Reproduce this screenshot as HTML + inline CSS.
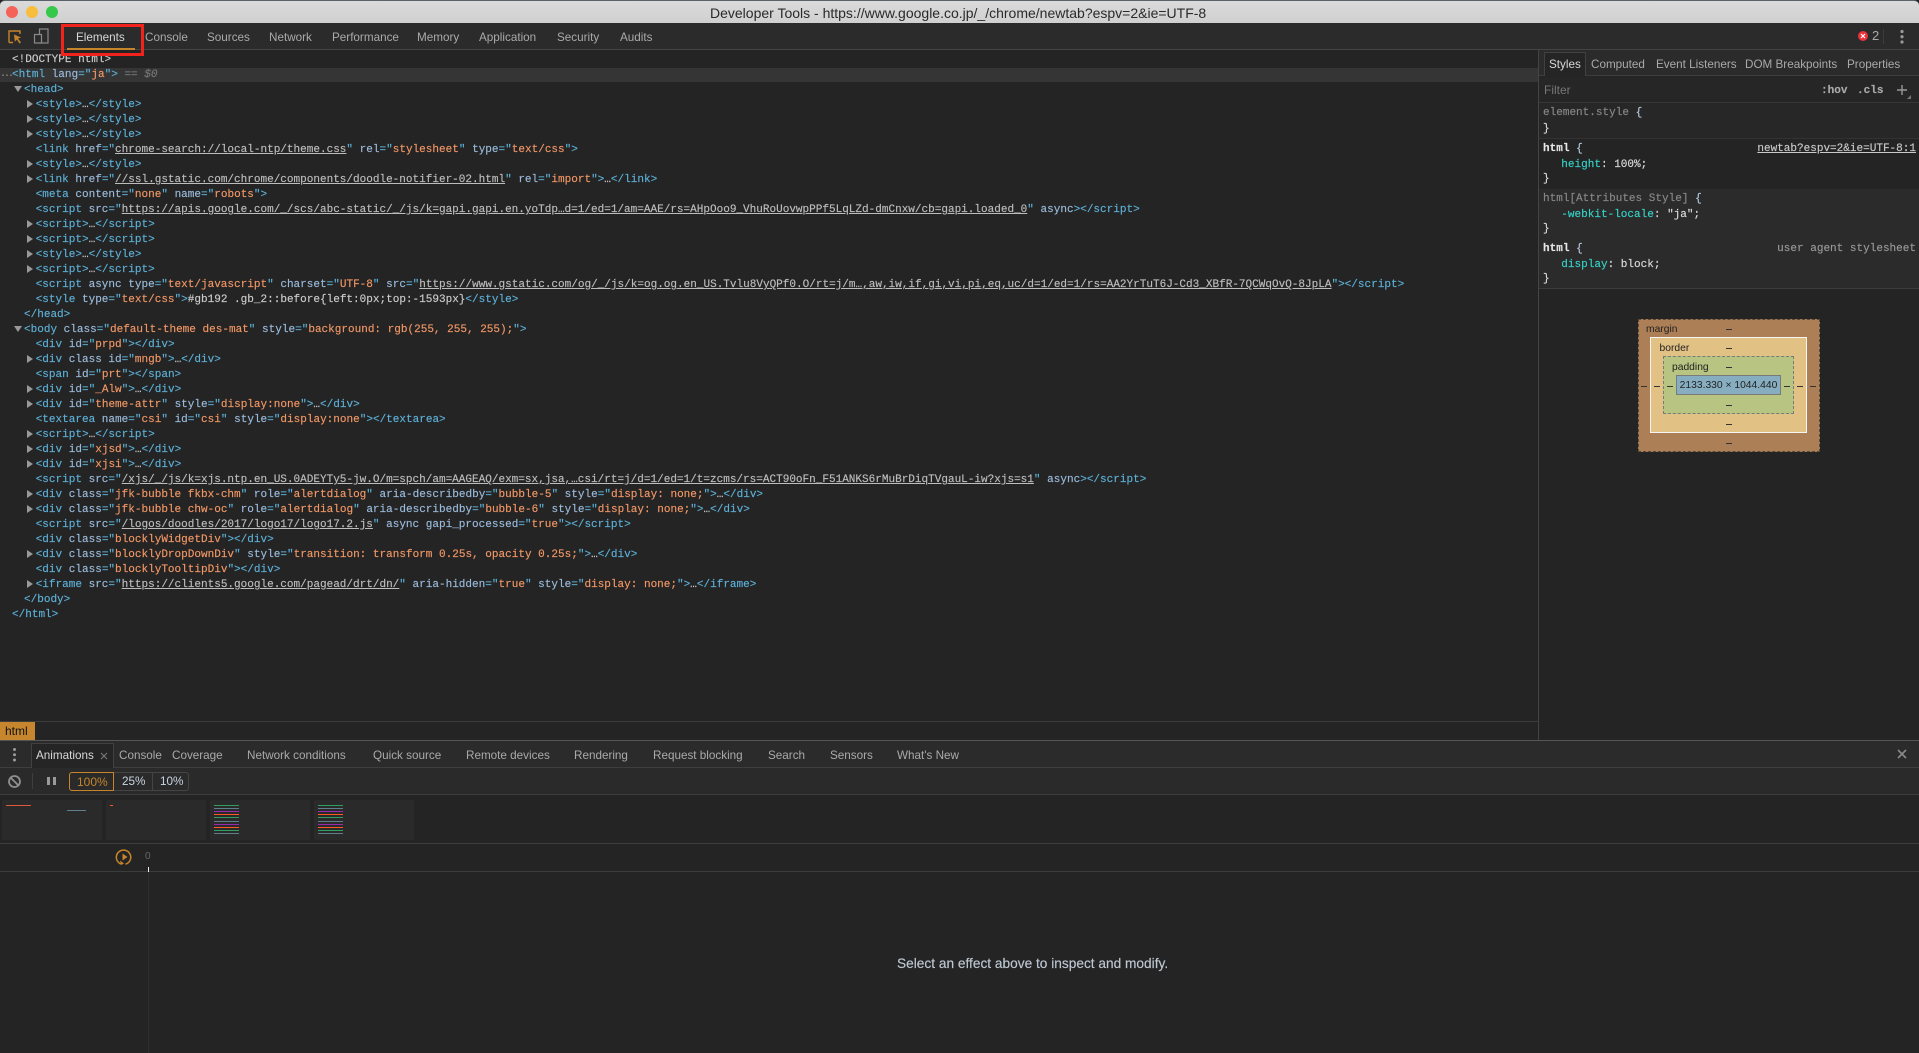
<!DOCTYPE html>
<html><head><meta charset="utf-8"><title>Developer Tools</title>
<style>
*{box-sizing:border-box}
html,body{margin:0;padding:0;width:1919px;height:1053px;overflow:hidden;background:#242424}
body{position:relative;font-family:"Liberation Sans",sans-serif;font-size:11.7px;color:#aaa;filter:blur(.3px)}
.r{position:absolute}
.tx{position:absolute;white-space:pre;line-height:16px}
#code{position:absolute;left:0;top:53px;width:1538px;font:11.03px/15px "Liberation Mono",monospace;color:#5db0d7;-webkit-text-stroke:.15px}
#code div{height:15px;white-space:pre;position:relative}
.i0{padding-left:12px}.i1{padding-left:24px}.i2{padding-left:35.7px}
.a{color:#9bbbdc}.v{color:#f29766}.u{color:#bdbdbd;text-decoration:underline}.w{color:#ccc}.g{color:#777}
.ar:before{content:"";position:absolute;left:27px;top:2px;border-left:6px solid #999;border-top:4px solid transparent;border-bottom:4px solid transparent}
.ad:before{content:"";position:absolute;left:13.5px;top:3px;border-top:6px solid #999;border-left:4px solid transparent;border-right:4px solid transparent}
.m{position:absolute;margin-top:1px;font:11.03px/16px "Liberation Mono",monospace;white-space:pre;color:#ddd;-webkit-text-stroke:.15px}
.p{color:#35d4c7}.n{color:#888}
.bx{position:absolute;margin-top:1px;font-size:10.3px;line-height:12px;color:#222;white-space:pre}
.d{position:absolute;width:6px;height:1px;background:#333}
.ln{position:absolute;width:25px;height:1px}
.th{position:absolute;top:800px;width:100px;height:40px;background:#2a2a2a;border-radius:2px}
</style></head><body>

<!-- title bar -->
<div class="r" style="left:0;top:0;width:1919px;height:23px;background:linear-gradient(#dadada,#d0d0d0);border-top:1px solid #5a626c;border-radius:5px 5px 0 0"></div>
<div class="r" style="left:6px;top:6px;width:12px;height:12px;border-radius:50%;background:#f5625a"></div>
<div class="r" style="left:26px;top:6px;width:12px;height:12px;border-radius:50%;background:#f8bd3c"></div>
<div class="r" style="left:46px;top:6px;width:12px;height:12px;border-radius:50%;background:#36c84b"></div>
<div class="tx" style="left:710px;top:5px;font-size:14px;color:#2a2a2a">Developer Tools - https://www.google.co.jp/_/chrome/newtab?espv=2&amp;ie=UTF-8</div>

<!-- main toolbar -->
<div class="r" style="left:0;top:23px;width:1919px;height:27px;background:#2b2b2b;border-bottom:1px solid #444"></div>
<svg class="r" style="left:7px;top:28px" width="44" height="18" viewBox="0 0 44 18">
<path d="M2 14.5V3h11v3M2 14.5h4" fill="none" stroke="#c6842b" stroke-width="1.4"/>
<path d="M7 6.5l7 3-3 1 3 4-1.5 1-2.7-4-2 2.2z" fill="#c6842b"/>
<rect x="32.5" y="1" width="8.5" height="14" fill="none" stroke="#8a8a8a" stroke-width="1.2"/>
<rect x="27.5" y="6.5" width="7" height="8.5" fill="#2b2b2b" stroke="#8a8a8a" stroke-width="1.2"/>
</svg>
<div class="tx" style="left:76px;top:30px;color:#d8d8d8">Elements</div>
<div class="tx" style="left:145px;top:30px">Console</div>
<div class="tx" style="left:207px;top:30px">Sources</div>
<div class="tx" style="left:269px;top:30px">Network</div>
<div class="tx" style="left:332px;top:30px">Performance</div>
<div class="tx" style="left:417px;top:30px">Memory</div>
<div class="tx" style="left:479px;top:30px">Application</div>
<div class="tx" style="left:557px;top:30px">Security</div>
<div class="tx" style="left:620px;top:30px">Audits</div>
<div class="r" style="left:67px;top:48px;width:68px;height:2px;background:#c6842b"></div>
<div class="r" style="left:61px;top:24px;width:83px;height:32px;border:3px solid #f1231c;z-index:5"></div>
<svg class="r" style="left:1857px;top:30px" width="12" height="12" viewBox="0 0 12 12"><circle cx="6" cy="6" r="5" fill="#e8333a"/><path d="M4 4l4 4M8 4l-4 4" stroke="#fff" stroke-width="1.2"/></svg>
<div class="tx" style="left:1872px;top:28px;font-size:13px">2</div>
<div class="r" style="left:1883px;top:29px;width:1px;height:15px;background:#3c3c3c"></div>
<svg class="r" style="left:1899px;top:29px" width="6" height="16"><circle cx="3" cy="2.5" r="1.6" fill="#999"/><circle cx="3" cy="7.7" r="1.6" fill="#999"/><circle cx="3" cy="13" r="1.6" fill="#999"/></svg>

<!-- selected line -->
<div class="r" style="left:0;top:68px;width:1538px;height:14px;background:#353535"></div>
<div class="tx" style="left:0;top:67px;font:10px/16px 'Liberation Mono',monospace;color:#999;letter-spacing:-2px">...</div>

<!-- code -->
<div id="code">
<div class="i0 w">&lt;!DOCTYPE html&gt;</div>
<div class="i0">&lt;html <span class="a">lang</span>="<span class="v">ja</span>"&gt; <span class="g">== <i>$0</i></span></div>
<div class="i1 ad">&lt;head&gt;</div>
<div class="i2 ar">&lt;style&gt;<span class="w">…</span>&lt;/style&gt;</div>
<div class="i2 ar">&lt;style&gt;<span class="w">…</span>&lt;/style&gt;</div>
<div class="i2 ar">&lt;style&gt;<span class="w">…</span>&lt;/style&gt;</div>
<div class="i2">&lt;link <span class="a">href</span>="<span class="u">chrome-search://local-ntp/theme.css</span>" <span class="a">rel</span>="<span class="v">stylesheet</span>" <span class="a">type</span>="<span class="v">text/css</span>"&gt;</div>
<div class="i2 ar">&lt;style&gt;<span class="w">…</span>&lt;/style&gt;</div>
<div class="i2 ar">&lt;link <span class="a">href</span>="<span class="u">//ssl.gstatic.com/chrome/components/doodle-notifier-02.html</span>" <span class="a">rel</span>="<span class="v">import</span>"&gt;<span class="w">…</span>&lt;/link&gt;</div>
<div class="i2">&lt;meta <span class="a">content</span>="<span class="v">none</span>" <span class="a">name</span>="<span class="v">robots</span>"&gt;</div>
<div class="i2">&lt;script <span class="a">src</span>="<span class="u">https://apis.google.com/_/scs/abc-static/_/js/k=gapi.gapi.en.yoTdp…d=1/ed=1/am=AAE/rs=AHpOoo9_VhuRoUovwpPPf5LqLZd-dmCnxw/cb=gapi.loaded_0</span>" <span class="a">async</span>&gt;&lt;/script&gt;</div>
<div class="i2 ar">&lt;script&gt;<span class="w">…</span>&lt;/script&gt;</div>
<div class="i2 ar">&lt;script&gt;<span class="w">…</span>&lt;/script&gt;</div>
<div class="i2 ar">&lt;style&gt;<span class="w">…</span>&lt;/style&gt;</div>
<div class="i2 ar">&lt;script&gt;<span class="w">…</span>&lt;/script&gt;</div>
<div class="i2">&lt;script <span class="a">async type</span>="<span class="v">text/javascript</span>" <span class="a">charset</span>="<span class="v">UTF-8</span>" <span class="a">src</span>="<span class="u">https://www.gstatic.com/og/_/js/k=og.og.en_US.Tvlu8VyQPf0.O/rt=j/m…,aw,iw,if,gi,vi,pi,eq,uc/d=1/ed=1/rs=AA2YrTuT6J-Cd3_XBfR-7QCWqOvQ-8JpLA</span>"&gt;&lt;/script&gt;</div>
<div class="i2">&lt;style <span class="a">type</span>="<span class="v">text/css</span>"&gt;<span class="w">#gb192 .gb_2::before{left:0px;top:-1593px}</span>&lt;/style&gt;</div>
<div class="i1">&lt;/head&gt;</div>
<div class="i1 ad">&lt;body <span class="a">class</span>="<span class="v">default-theme des-mat</span>" <span class="a">style</span>="<span class="v">background: rgb(255, 255, 255);</span>"&gt;</div>
<div class="i2">&lt;div <span class="a">id</span>="<span class="v">prpd</span>"&gt;&lt;/div&gt;</div>
<div class="i2 ar">&lt;div <span class="a">class id</span>="<span class="v">mngb</span>"&gt;<span class="w">…</span>&lt;/div&gt;</div>
<div class="i2">&lt;span <span class="a">id</span>="<span class="v">prt</span>"&gt;&lt;/span&gt;</div>
<div class="i2 ar">&lt;div <span class="a">id</span>="<span class="v">_Alw</span>"&gt;<span class="w">…</span>&lt;/div&gt;</div>
<div class="i2 ar">&lt;div <span class="a">id</span>="<span class="v">theme-attr</span>" <span class="a">style</span>="<span class="v">display:none</span>"&gt;<span class="w">…</span>&lt;/div&gt;</div>
<div class="i2">&lt;textarea <span class="a">name</span>="<span class="v">csi</span>" <span class="a">id</span>="<span class="v">csi</span>" <span class="a">style</span>="<span class="v">display:none</span>"&gt;&lt;/textarea&gt;</div>
<div class="i2 ar">&lt;script&gt;<span class="w">…</span>&lt;/script&gt;</div>
<div class="i2 ar">&lt;div <span class="a">id</span>="<span class="v">xjsd</span>"&gt;<span class="w">…</span>&lt;/div&gt;</div>
<div class="i2 ar">&lt;div <span class="a">id</span>="<span class="v">xjsi</span>"&gt;<span class="w">…</span>&lt;/div&gt;</div>
<div class="i2">&lt;script <span class="a">src</span>="<span class="u">/xjs/_/js/k=xjs.ntp.en_US.0ADEYTy5-jw.O/m=spch/am=AAGEAQ/exm=sx,jsa,…csi/rt=j/d=1/ed=1/t=zcms/rs=ACT90oFn_F51ANKS6rMuBrDiqTVgauL-iw?xjs=s1</span>" <span class="a">async</span>&gt;&lt;/script&gt;</div>
<div class="i2 ar">&lt;div <span class="a">class</span>="<span class="v">jfk-bubble fkbx-chm</span>" <span class="a">role</span>="<span class="v">alertdialog</span>" <span class="a">aria-describedby</span>="<span class="v">bubble-5</span>" <span class="a">style</span>="<span class="v">display: none;</span>"&gt;<span class="w">…</span>&lt;/div&gt;</div>
<div class="i2 ar">&lt;div <span class="a">class</span>="<span class="v">jfk-bubble chw-oc</span>" <span class="a">role</span>="<span class="v">alertdialog</span>" <span class="a">aria-describedby</span>="<span class="v">bubble-6</span>" <span class="a">style</span>="<span class="v">display: none;</span>"&gt;<span class="w">…</span>&lt;/div&gt;</div>
<div class="i2">&lt;script <span class="a">src</span>="<span class="u">/logos/doodles/2017/logo17/logo17.2.js</span>" <span class="a">async gapi_processed</span>="<span class="v">true</span>"&gt;&lt;/script&gt;</div>
<div class="i2">&lt;div <span class="a">class</span>="<span class="v">blocklyWidgetDiv</span>"&gt;&lt;/div&gt;</div>
<div class="i2 ar">&lt;div <span class="a">class</span>="<span class="v">blocklyDropDownDiv</span>" <span class="a">style</span>="<span class="v">transition: transform 0.25s, opacity 0.25s;</span>"&gt;<span class="w">…</span>&lt;/div&gt;</div>
<div class="i2">&lt;div <span class="a">class</span>="<span class="v">blocklyTooltipDiv</span>"&gt;&lt;/div&gt;</div>
<div class="i2 ar">&lt;iframe <span class="a">src</span>="<span class="u">https://clients5.google.com/pagead/drt/dn/</span>" <span class="a">aria-hidden</span>="<span class="v">true</span>" <span class="a">style</span>="<span class="v">display: none;</span>"&gt;<span class="w">…</span>&lt;/iframe&gt;</div>
<div class="i1">&lt;/body&gt;</div>
<div class="i0">&lt;/html&gt;</div>
</div>

<!-- breadcrumb -->
<div class="r" style="left:0;top:721px;width:1538px;height:1px;background:#3c3c3c"></div>
<div class="r" style="left:0;top:722px;width:35px;height:18px;background:#c6862e"></div>
<div class="tx" style="left:5px;top:723px;color:#111;font-size:12px">html</div>

<!-- sidebar -->
<div class="r" style="left:1538px;top:50px;width:1px;height:690px;background:#444"></div>
<div class="r" style="left:1539px;top:50px;width:380px;height:26px;background:#2b2b2b;border-bottom:1px solid #3e3e3e"></div>
<div class="r" style="left:1544px;top:52px;width:42px;height:24px;border:1px solid #414141;border-bottom:0;background:#252525"></div>
<div class="tx" style="left:1549px;top:57px;color:#d8d8d8">Styles</div>
<div class="tx" style="left:1591px;top:57px">Computed</div>
<div class="tx" style="left:1656px;top:57px">Event Listeners</div>
<div class="tx" style="left:1745px;top:57px">DOM Breakpoints</div>
<div class="tx" style="left:1847px;top:57px">Properties</div>

<div class="r" style="left:1539px;top:77px;width:380px;height:26px;background:#262626;border-bottom:1px solid #363636"></div>
<div class="tx" style="left:1544px;top:82px;color:#777;font-size:12px">Filter</div>
<div class="m" style="left:1821px;top:82px;font-weight:bold;color:#aaa">:hov</div>
<div class="m" style="left:1857px;top:82px;font-weight:bold;color:#aaa">.cls</div>
<svg class="r" style="left:1896px;top:84px" width="20" height="17"><path d="M1 6h10M6 1v10" stroke="#999" stroke-width="1.4"/><path d="M15 15h-4l4-4z" fill="#777"/></svg>

<div class="r" style="left:1539px;top:103px;width:380px;height:36px;background:#272727;border-bottom:1px solid #323232"></div>
<div class="r" style="left:1539px;top:140px;width:380px;height:49px;background:#242424"></div>
<div class="r" style="left:1539px;top:189px;width:380px;height:100px;background:#2b2b2b;border-bottom:1px solid #3c3c3c"></div>

<div class="m" style="left:1543px;top:104px"><span class="n">element.style</span> <span style="color:#b5cbe0">{</span></div>
<div class="m" style="left:1543px;top:120px">}</div>
<div class="m" style="left:1543px;top:140px;color:#e6e6e6;font-weight:bold">html <span style="font-weight:normal;color:#b5cbe0">{</span></div>
<div class="m" style="left:1561.3px;top:156px"><span class="p">height</span>: 100%;</div>
<div class="m" style="left:1543px;top:170px">}</div>
<div class="m" style="left:1436px;top:140px;width:480px;text-align:right;color:#c9c9c9"><span style="text-decoration:underline">newtab?espv=2&amp;ie=UTF-8:1</span></div>
<div class="m" style="left:1543px;top:190px"><span class="n">html[Attributes Style]</span> <span style="color:#b5cbe0">{</span></div>
<div class="m" style="left:1561.3px;top:206px"><span class="p">-webkit-locale</span>: "ja";</div>
<div class="m" style="left:1543px;top:220px">}</div>
<div class="m" style="left:1543px;top:240px;color:#e6e6e6;font-weight:bold">html <span style="font-weight:normal;color:#b5cbe0">{</span></div>
<div class="m" style="left:1436px;top:240px;width:480px;text-align:right;color:#999">user agent stylesheet</div>
<div class="m" style="left:1561.3px;top:256px"><span class="p">display</span>: block;</div>
<div class="m" style="left:1543px;top:270px">}</div>

<!-- box model -->
<div class="r" style="left:1638px;top:319px;width:182px;height:133px;background:#ad7f57;border:1px dashed #5a4a38"></div>
<div class="r" style="left:1650px;top:337px;width:157px;height:96px;background:#e1c184;border:1px solid #f5f5f5"></div>
<div class="r" style="left:1663px;top:356px;width:131px;height:58px;background:#b8c482;border:1px dashed #7a7a7a"></div>
<div class="r" style="left:1676px;top:375px;width:105px;height:20px;background:#87adc0;border:1px solid #7a7a7a"></div>
<div class="bx" style="left:1646px;top:323px">margin</div>
<div class="bx" style="left:1659.5px;top:342px">border</div>
<div class="bx" style="left:1672px;top:361px">padding</div>
<div class="bx" style="left:1676px;top:379px;width:105px;text-align:center">2133.330 × 1044.440</div>
<div class="d" style="left:1726px;top:329px"></div><div class="d" style="left:1726px;top:348px"></div><div class="d" style="left:1726px;top:367px"></div>
<div class="d" style="left:1726px;top:405px"></div><div class="d" style="left:1726px;top:424px"></div><div class="d" style="left:1726px;top:443px"></div>
<div class="d" style="left:1641px;top:386px"></div><div class="d" style="left:1654px;top:386px"></div><div class="d" style="left:1667px;top:386px"></div>
<div class="d" style="left:1784px;top:386px"></div><div class="d" style="left:1797px;top:386px"></div><div class="d" style="left:1810px;top:386px"></div>

<!-- drawer tabs -->
<div class="r" style="left:0;top:740px;width:1919px;height:1px;background:#555"></div>
<div class="r" style="left:0;top:741px;width:1919px;height:27px;background:#2b2b2b;border-bottom:1px solid #3e3e3e"></div>
<svg class="r" style="left:12px;top:747px" width="5" height="16"><circle cx="2.5" cy="2.5" r="1.5" fill="#999"/><circle cx="2.5" cy="7.7" r="1.5" fill="#999"/><circle cx="2.5" cy="13" r="1.5" fill="#999"/></svg>
<div class="r" style="left:31px;top:743px;width:83px;height:25px;border:1px solid #414141;border-bottom:0;background:#252525"></div>
<div class="tx" style="left:36px;top:748px;color:#d8d8d8">Animations</div>
<svg class="r" style="left:100px;top:752px" width="8" height="8"><path d="M1 1l6 6M7 1l-6 6" stroke="#777" stroke-width="1.1"/></svg>
<div class="tx" style="left:119px;top:748px">Console</div>
<div class="tx" style="left:172px;top:748px">Coverage</div>
<div class="tx" style="left:247px;top:748px">Network conditions</div>
<div class="tx" style="left:373px;top:748px">Quick source</div>
<div class="tx" style="left:466px;top:748px">Remote devices</div>
<div class="tx" style="left:574px;top:748px">Rendering</div>
<div class="tx" style="left:653px;top:748px">Request blocking</div>
<div class="tx" style="left:768px;top:748px">Search</div>
<div class="tx" style="left:830px;top:748px">Sensors</div>
<div class="tx" style="left:897px;top:748px">What's New</div>
<svg class="r" style="left:1897px;top:749px" width="10" height="10"><path d="M1 1l8 8M9 1l-8 8" stroke="#8a8a8a" stroke-width="1.6"/></svg>

<!-- animation toolbar -->
<div class="r" style="left:0;top:768px;width:1919px;height:27px;background:#2a2a2a;border-bottom:1px solid #3e3e3e"></div>
<svg class="r" style="left:7px;top:774px" width="15" height="15"><circle cx="7.5" cy="7.5" r="5.5" fill="none" stroke="#8f8f8f" stroke-width="1.8"/><path d="M3.7 3.7l7.6 7.6" stroke="#8f8f8f" stroke-width="1.8"/></svg>
<div class="r" style="left:32px;top:773px;width:1px;height:16px;background:#3e3e3e"></div>
<div class="r" style="left:47px;top:777px;width:3px;height:8px;background:#999"></div>
<div class="r" style="left:53px;top:777px;width:3px;height:8px;background:#999"></div>
<div class="r" style="left:69px;top:772px;width:120px;height:19px;border:1px solid #444;border-radius:3px"></div>
<div class="r" style="left:69px;top:772px;width:45px;height:19px;border:1px solid #c6842b;border-radius:3px 0 0 3px"></div>
<div class="r" style="left:152px;top:773px;width:1px;height:17px;background:#444"></div>
<div class="tx" style="left:77px;top:774px;color:#c6842b;font-size:12px">100%</div>
<div class="tx" style="left:122px;top:774px;color:#c9d6e2">25%</div>
<div class="tx" style="left:160px;top:774px;color:#c9d6e2">10%</div>

<!-- thumbnails -->
<div class="th" style="left:2px"></div><div class="th" style="left:106px"></div><div class="th" style="left:210px"></div><div class="th" style="left:314px"></div>
<div class="ln" style="left:6px;top:805px;background:#e0583c"></div>
<div class="ln" style="left:67px;top:810px;width:19px;background:#5f7f90"></div>
<div class="ln" style="left:110px;top:805px;width:3px;background:#ff5722"></div>

<div class="ln" style="left:214px;top:805px;background:#2e9e5f"></div>
<div class="ln" style="left:214px;top:808px;background:#607d8b"></div>
<div class="ln" style="left:214px;top:811px;background:#9c27b0"></div>
<div class="ln" style="left:214px;top:814px;background:#ff5722"></div>
<div class="ln" style="left:214px;top:817px;background:#2e9e5f"></div>
<div class="ln" style="left:214px;top:821px;background:#607d8b"></div>
<div class="ln" style="left:214px;top:824px;background:#9c27b0"></div>
<div class="ln" style="left:214px;top:827px;background:#ff5722"></div>
<div class="ln" style="left:214px;top:830px;background:#2e9e5f"></div>
<div class="ln" style="left:214px;top:833px;background:#607d8b"></div>

<div class="ln" style="left:318px;top:805px;background:#2e9e5f"></div>
<div class="ln" style="left:318px;top:808px;background:#607d8b"></div>
<div class="ln" style="left:318px;top:811px;background:#9c27b0"></div>
<div class="ln" style="left:318px;top:814px;background:#ff5722"></div>
<div class="ln" style="left:318px;top:817px;background:#2e9e5f"></div>
<div class="ln" style="left:318px;top:821px;background:#607d8b"></div>
<div class="ln" style="left:318px;top:824px;background:#9c27b0"></div>
<div class="ln" style="left:318px;top:827px;background:#ff5722"></div>
<div class="ln" style="left:318px;top:830px;background:#2e9e5f"></div>
<div class="ln" style="left:318px;top:833px;background:#607d8b"></div>

<!-- timeline -->
<div class="r" style="left:0;top:843px;width:1919px;height:1px;background:#3c3c3c"></div>
<div class="r" style="left:0;top:871px;width:1919px;height:1px;background:#3c3c3c"></div>
<svg class="r" style="left:115px;top:848px" width="18" height="18" viewBox="0 0 18 18"><path d="M6 16a7.2 7.2 0 1 1 4.5.2" fill="none" stroke="#c6842b" stroke-width="1.5"/><path d="M5 12.5l1 4.5 3-1.5z" fill="#c6842b"/><path d="M7.5 5.5l5 3.5-5 3.5z" fill="#c6842b"/></svg>
<div class="tx" style="left:145px;top:849px;font-size:10px;color:#666">0</div>
<div class="r" style="left:148px;top:872px;width:1px;height:181px;background:#2e2e2e"></div>
<div class="r" style="left:148px;top:867px;width:1px;height:5px;background:#eee"></div>
<div class="tx" style="left:897px;top:956px;font-size:13.7px;color:#bdc8d3;-webkit-text-stroke:.15px">Select an effect above to inspect and modify.</div>

</body></html>
